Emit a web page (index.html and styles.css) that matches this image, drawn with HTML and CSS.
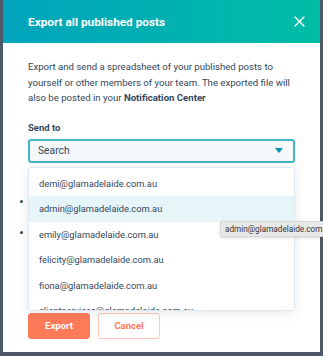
FILE: index.html
```html
<!DOCTYPE html>
<html lang="en">
<head>
  <meta charset="UTF-8">
  <title>Export all published posts</title>
  <link rel="stylesheet" href="styles.css">
</head>
<body>
  <div class="modal">
    <div class="modal-header">
      <h1 class="modal-title">Export all published posts</h1>
      <svg class="close-icon" width="11" height="11" viewBox="0 0 11 11">
        <path d="M1 1 L10 10 M10 1 L1 10" stroke="#ffffff" stroke-width="1.4" stroke-linecap="round"/>
      </svg>
    </div>
    <div class="modal-body">
      <p class="intro">Export and send a spreadsheet of your published posts to yourself or other members of your team. The exported file will also be posted in your <b>Notification Center</b></p>

      <div class="field-label">Send to</div>
      <div class="select-wrap">
        <div class="select-box">
          <span>Search</span>
          <svg class="caret" width="8" height="5" viewBox="0 0 8 5"><path d="M0 0 L8 0 L4 5 Z" fill="#0091ae"/></svg>
        </div>
        <div class="behind-list">
          <span class="dot"></span>
          <span class="dot"></span>
        </div>
        <ul class="dropdown">
          <li>demi@glamadelaide.com.au</li>
          <li class="active">admin@glamadelaide.com.au</li>
          <li>emily@glamadelaide.com.au</li>
          <li>felicity@glamadelaide.com.au</li>
          <li>fiona@glamadelaide.com.au</li>
          <li>clientservices@glamadelaide.com.au</li>
        </ul>
      </div>

      <div class="actions">
        <button class="btn btn-primary">Export</button>
        <button class="btn btn-secondary">Cancel</button>
      </div>
    </div>
  </div>
  <div class="tooltip">admin@glamadelaide.com.au</div>
</body>
</html>
```

FILE: styles.css
```css
body {
  margin: 0;
  background: #4d5966;
  font-family: Roboto, "Liberation Sans", sans-serif;
  color: #33475b;
  overflow: hidden;
}

.modal {
  width: 317px;
  height: 352px;
  margin-left: 3px;
  background: #ffffff;
  position: relative;
}

.modal-header {
  height: 43px;
  display: flex;
  align-items: center;
  justify-content: space-between;
  padding: 0 15px 0 25px;
  background: linear-gradient(90deg, #00a4bd 0%, #00bda5 100%);
}

.modal-title {
  margin: 0;
  color: #ffffff;
  font-size: 11.8px;
  font-weight: 700;
}

.modal-body {
  padding: 16px 25px 0 25px;
}

.intro {
  width: 276px;
  margin: 0;
  font-size: 9.6px;
  line-height: 15.5px;
}

.intro b {
  font-weight: 700;
}

.field-label {
  margin-top: 16px;
  font-size: 9.5px;
  line-height: 12px;
  font-weight: 700;
}

.select-wrap {
  position: relative;
  margin-top: 5px;
}

.select-box {
  height: 20px;
  border: 2px solid #45b6c9;
  border-radius: 3px;
  background: #f5f8fa;
  display: flex;
  align-items: center;
  justify-content: space-between;
  padding: 0 10px 0 8px;
  font-size: 10.3px;
}

.behind-list {
  height: 150px;
  position: relative;
}

.dot {
  position: absolute;
  left: -8px;
  width: 3px;
  height: 3px;
  border-radius: 50%;
  background: #33475b;
}

.dot:nth-child(1) { top: 37px; }
.dot:nth-child(2) { top: 68px; }

.dropdown {
  position: absolute;
  top: 28px;
  left: 0;
  right: 0;
  height: 144px;
  margin: 0;
  padding: 3px 0 0 0;
  list-style: none;
  background: #ffffff;
  border: 1px solid #e3e8ee;
  border-radius: 3px;
  box-shadow: 0 2px 12px rgba(45, 62, 80, 0.12);
  overflow: hidden;
  box-sizing: border-box;
  z-index: 1;
}

.dropdown li {
  height: 25.5px;
  line-height: 25.5px;
  padding-left: 10px;
  font-size: 9.3px;
}

.dropdown li.active {
  background: #e5f5f8;
}

.actions {
  display: flex;
  gap: 8px;
}

.btn {
  width: 62px;
  height: 26px;
  border-radius: 3px;
  font-family: inherit;
  font-size: 9.5px;
  font-weight: 700;
  padding: 0;
}

.btn-primary {
  background: #ff7a59;
  border: 1px solid #ff7a59;
  color: #ffffff;
}

.btn-secondary {
  background: #ffffff;
  border: 1px solid #ffc8b8;
  color: #ff7a59;
}

.tooltip {
  position: absolute;
  z-index: 2;
  left: 220px;
  top: 221px;
  height: 14px;
  line-height: 14px;
  padding: 0 4px;
  background: #e8e8e8;
  border: 1px solid #d6d6d6;
  border-radius: 2px;
  font-size: 8.2px;
  color: #333333;
  white-space: nowrap;
  box-shadow: 0 1px 3px rgba(0, 0, 0, 0.15);
}
```
